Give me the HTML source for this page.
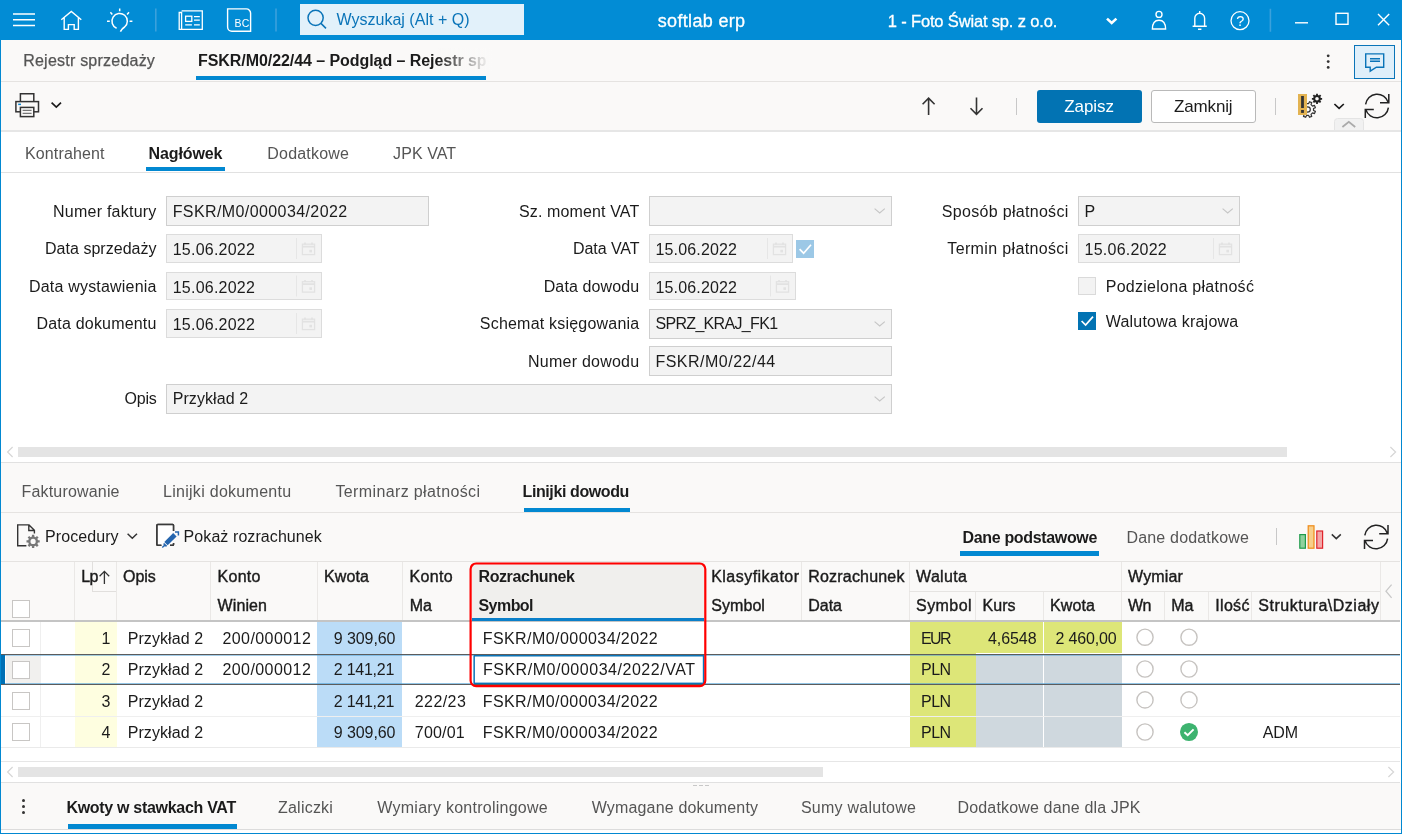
<!DOCTYPE html>
<html lang="pl"><head><meta charset="utf-8"><title>softlab erp</title>
<style>
html,body{margin:0;padding:0;}
body{width:1402px;height:834px;overflow:hidden;background:#fff;font-family:"Liberation Sans",sans-serif;}
#app{position:relative;width:1402px;height:834px;overflow:hidden;background:#fff;}
#app *{box-sizing:border-box;}
.a{position:absolute;}
.t{position:absolute;white-space:pre;line-height:1;color:#1b1b1b;}
.fld{position:absolute;background:#f3f3f3;border:1px solid #cfcfcf;}
.fld2{border-color:#dcdcdc;}
.hl{position:absolute;height:1px;background:#e1dfdd;}
.vl{position:absolute;width:1px;background:#eae8e6;}
.cb{position:absolute;width:18px;height:18px;background:#fff;border:1px solid #c8c6c4;}
.rad{position:absolute;width:18px;height:18px;border-radius:50%;border:1.2px solid #c6c3c0;background:#fff;}
svg{position:absolute;overflow:visible;}
#txt{position:absolute;left:0;top:0;width:1402px;height:834px;will-change:transform;z-index:3;}

</style></head>
<body>
<div id="app">
<!-- title bar -->
<div class="a" style="left:0;top:0;width:1402px;height:40px;background:#028cd5"></div>
<div class="a" style="left:300px;top:4px;width:224px;height:30.8px;background:#e2f1fa"></div>
<!-- tabs strip + toolbar background -->
<div class="a" style="left:0;top:40px;width:1402px;height:92px;background:#faf9f8"></div>
<div class="hl" style="left:0;top:81px;width:1402px;background:#e5e3e1"></div>
<div class="a" style="left:195.5px;top:75.6px;width:290.5px;height:4.4px;background:#0288d1"></div>
<div class="a" style="left:436px;top:48px;width:56px;height:26px;z-index:4;background:linear-gradient(90deg,rgba(250,249,248,0),rgba(250,249,248,.97) 92%)"></div>
<div class="a" style="left:0;top:130px;width:1402px;height:2px;background:#e6e6e6"></div>
<!-- chat button -->
<div class="a" style="left:1354px;top:45px;width:41px;height:33.5px;background:#dfeffa;border:1.3px solid #0a74b8"></div>
<!-- Zapisz / Zamknij -->
<div class="a" style="left:1037px;top:90px;width:105px;height:33px;background:#0273b3;border-radius:3px"></div>
<div class="a" style="left:1151px;top:90px;width:105px;height:33px;background:#fff;border:1px solid #b9b9b9;border-radius:3px"></div>
<div class="vl" style="left:1016px;top:98px;height:17px;background:#c8c8c8"></div>
<div class="vl" style="left:1275px;top:98px;height:17px;background:#c8c8c8"></div>
<!-- form panel -->
<div class="hl" style="left:0;top:172px;width:1402px;background:#e1e1e1"></div>
<div class="a" style="left:146px;top:167px;width:78.7px;height:4.4px;background:#0288d1"></div>
<!-- fields col1 -->
<div class="fld" style="left:166px;top:196px;width:263px;height:30px"></div>
<div class="fld fld2" style="left:166px;top:234px;width:156px;height:29px"></div>
<div class="fld fld2" style="left:166px;top:272px;width:156px;height:28px"></div>
<div class="fld fld2" style="left:166px;top:309px;width:156px;height:29px"></div>
<div class="fld" style="left:166px;top:384px;width:726px;height:30px"></div>
<!-- fields col2 -->
<div class="fld" style="left:649px;top:196px;width:243px;height:30px"></div>
<div class="fld fld2" style="left:649px;top:234px;width:144px;height:29px"></div>
<div class="fld fld2" style="left:649px;top:272px;width:147px;height:28px"></div>
<div class="fld" style="left:649px;top:309px;width:243px;height:30px"></div>
<div class="fld" style="left:649px;top:346px;width:243px;height:30px"></div>
<!-- fields col3 -->
<div class="fld" style="left:1078px;top:196px;width:162px;height:30px"></div>
<div class="fld fld2" style="left:1078px;top:234px;width:162px;height:29px"></div>
<!-- check boxes -->
<div class="a" style="left:796px;top:240px;width:18px;height:18px;background:#9cc8e6"></div>
<div class="a" style="left:1078px;top:277px;width:18px;height:18px;background:#f3f3f3;border:1px solid #dadada"></div>
<div class="a" style="left:1078px;top:312px;width:18px;height:18px;background:#0273b3"></div>
<!-- form scrollbar -->
<div class="a" style="left:18px;top:447px;width:1269px;height:10.4px;background:#e4e4e4"></div>
<div class="hl" style="left:0;top:462px;width:1402px;background:#e1e1e1"></div>
<!-- lower panel -->
<div class="a" style="left:0;top:463px;width:1402px;height:98px;background:#faf9f8"></div>
<div class="hl" style="left:0;top:512px;width:1402px;background:#e5e3e1"></div>
<div class="a" style="left:524px;top:508px;width:106px;height:4.4px;background:#0288d1"></div>
<div class="a" style="left:960px;top:551.2px;width:139px;height:4.6px;background:#0288d1"></div>
<div class="vl" style="left:1276px;top:528px;height:17px;background:#c8c8c8"></div>
<!-- grid header -->
<div class="a" style="left:0;top:561px;width:1402px;height:60px;background:#faf9f8;border-top:1px solid #e5e3e1"></div>
<div class="a" style="left:472px;top:562px;width:232px;height:59px;background:#f0efed"></div>
<div class="a" style="left:0;top:620.3px;width:1400px;height:1.5px;background:#c4c4c4"></div>
<div class="a" style="left:472px;top:618px;width:232px;height:2.7px;background:#0a7fc9"></div>
<div class="a" style="left:92px;top:561px;width:25px;height:31px;border:1px solid #e1dfdd;background:#faf9f8"></div>
<div class="vl" style="left:74px;top:562px;height:58px"></div>
<div class="vl" style="left:116px;top:562px;height:58px"></div>
<div class="vl" style="left:210px;top:562px;height:58px"></div>
<div class="vl" style="left:317px;top:562px;height:58px"></div>
<div class="vl" style="left:402px;top:562px;height:58px"></div>
<div class="vl" style="left:801px;top:562px;height:58px"></div>
<div class="vl" style="left:909px;top:562px;height:58px"></div>
<div class="vl" style="left:975px;top:591px;height:29px"></div>
<div class="vl" style="left:1043px;top:591px;height:29px"></div>
<div class="vl" style="left:1121px;top:562px;height:58px"></div>
<div class="vl" style="left:1164px;top:591px;height:29px"></div>
<div class="vl" style="left:1208px;top:591px;height:29px"></div>
<div class="vl" style="left:1251px;top:591px;height:29px"></div>
<div class="vl" style="left:1380px;top:562px;height:58px"></div>
<div class="hl" style="left:909px;top:591px;width:471px;background:#e6e4e2"></div>
<div class="cb" style="left:12px;top:600px"></div>
<!-- grid rows backgrounds -->
<div class="a" style="left:0;top:622px;width:1402px;height:126px;background:#fff"></div>
<!-- Lp yellow -->
<div class="a" style="left:75px;top:622px;width:42px;height:125px;background:#fefee0"></div>
<!-- Kwota blue -->
<div class="a" style="left:317px;top:622px;width:85px;height:125px;background:#bbdcf7"></div>
<!-- Waluta yellowgreen + grey -->
<div class="a" style="left:910px;top:622px;width:66px;height:125px;background:#dde678"></div>
<div class="a" style="left:976px;top:622px;width:67px;height:31px;background:#dde678"></div>
<div class="a" style="left:1044px;top:622px;width:77.8px;height:31px;background:#dde678"></div>
<div class="a" style="left:976px;top:654px;width:67px;height:93px;background:#cfd8de"></div>
<div class="a" style="left:1044px;top:654px;width:77.8px;height:93px;background:#cfd8de"></div>
<!-- row lines -->
<div class="hl" style="left:0;top:716px;width:1400px;background:#efefef"></div>
<div class="hl" style="left:0;top:747px;width:1400px;background:#eaeaea"></div>
<div class="vl" style="left:40px;top:622px;height:125px;background:#efefef"></div>
<!-- selected row -->
<div class="a" style="left:6px;top:655.5px;width:34.4px;height:28px;background:#f1f0ee"></div>
<div class="a" style="left:0;top:654px;width:1400px;height:1px;background:#5c5c5c"></div><div class="a" style="left:0;top:655px;width:1400px;height:1px;background:rgba(74,158,214,.5)"></div>
<div class="a" style="left:0;top:682.7px;width:1400px;height:1px;background:rgba(74,158,214,.6)"></div><div class="a" style="left:0;top:683.6px;width:1400px;height:1px;background:#5c5c5c"></div>
<div class="a" style="left:1px;top:655px;width:4px;height:28.6px;background:#0070b5"></div>
<div class="a" style="left:473.4px;top:655px;width:230.9px;height:29.1px;background:#fff"></div>
<!-- row checkboxes -->
<div class="cb" style="left:12px;top:629px"></div>
<div class="cb" style="left:12px;top:661px"></div>
<div class="cb" style="left:12px;top:691.5px"></div>
<div class="cb" style="left:12px;top:723px"></div>
<!-- radios -->




<div class="a" style="left:1180.1px;top:723.1px;width:17.8px;height:17.8px;border-radius:50%;background:#3db36f"></div>
<!-- red annotation -->

<!-- grid bottom / scrollbar -->
<div class="hl" style="left:0;top:761px;width:1402px;background:#e6e6e6"></div>
<div class="a" style="left:18px;top:767px;width:805px;height:10.4px;background:#e4e4e4"></div>
<div class="hl" style="left:0;top:782px;width:1402px;background:#e1e1e1"></div>
<!-- bottom tabs -->
<div class="a" style="left:0;top:783px;width:1402px;height:51px;background:#faf9f8"></div>
<div class="a" style="left:68px;top:824px;width:169px;height:4.7px;background:#0288d1"></div>
<div class="hl" style="left:0;top:829px;width:1402px;background:#dcdcdc"></div>
<!-- window border -->
<div class="a" style="left:0;top:40px;width:1px;height:794px;background:#0288d1;z-index:7"></div>
<div class="a" style="left:1400px;top:561px;width:1px;height:222px;background:#fff;z-index:7"></div><div class="a" style="left:1401px;top:40px;width:1px;height:794px;background:#0288d1;z-index:7"></div>
<div class="a" style="left:0;top:830px;width:1402px;height:3px;background:#fff"></div><div class="a" style="left:0;top:833px;width:1402px;height:1px;background:#0288d1;z-index:7"></div>

<div id="txt">
<span class="t" style="left:336.50px;top:12.00px;font-size:16px;color:#0a74b8;letter-spacing:0.013px;">Wyszukaj (Alt + Q)</span>
<span class="t" style="left:657.80px;top:12.00px;font-size:18px;color:#ffffff;letter-spacing:0.322px;-webkit-text-stroke:0.3px #fff;">softlab erp</span>
<span class="t" style="left:887.80px;top:13.00px;font-size:16.5px;color:#ffffff;letter-spacing:-0.161px;-webkit-text-stroke:0.3px #fff;">1 - Foto Świat sp. z o.o.</span>
<span class="t" style="left:23.20px;top:53.00px;font-size:16px;color:#555555;letter-spacing:0.227px;-webkit-text-stroke:0.25px #555;">Rejestr sprzedaży</span>
<span class="t" style="left:198.00px;top:53.00px;font-size:16px;font-weight:700;letter-spacing:-0.063px;">FSKR/M0/22/44 – Podgląd – Rejestr sp</span>
<span class="t" style="left:1064.30px;top:98.00px;font-size:17px;color:#ffffff;letter-spacing:-0.096px;">Zapisz</span>
<span class="t" style="left:1174.00px;top:98.00px;font-size:17px;letter-spacing:-0.145px;">Zamknij</span>
<span class="t" style="left:25.00px;top:146.00px;font-size:16px;color:#555555;letter-spacing:0.132px;">Kontrahent</span>
<span class="t" style="left:148.60px;top:146.00px;font-size:16px;font-weight:700;letter-spacing:-0.111px;">Nagłówek</span>
<span class="t" style="left:267.30px;top:146.00px;font-size:16px;color:#555555;letter-spacing:0.206px;">Dodatkowe</span>
<span class="t" style="left:393.10px;top:146.00px;font-size:16px;color:#555555;letter-spacing:0.067px;">JPK VAT</span>
<span class="t" style="left:53.00px;top:204.00px;font-size:16px;letter-spacing:0.241px;">Numer faktury</span>
<span class="t" style="left:45.00px;top:241.00px;font-size:16px;letter-spacing:0.031px;">Data sprzedaży</span>
<span class="t" style="left:29.00px;top:279.00px;font-size:16px;letter-spacing:0.194px;">Data wystawienia</span>
<span class="t" style="left:36.50px;top:316.00px;font-size:16px;letter-spacing:0.192px;">Data dokumentu</span>
<span class="t" style="left:124.50px;top:391.00px;font-size:16px;letter-spacing:-0.202px;">Opis</span>
<span class="t" style="left:172.70px;top:204.00px;font-size:16px;letter-spacing:0.404px;">FSKR/M0/000034/2022</span>
<span class="t" style="left:172.70px;top:242.00px;font-size:16px;letter-spacing:0.232px;">15.06.2022</span>
<span class="t" style="left:172.70px;top:280.00px;font-size:16px;letter-spacing:0.232px;">15.06.2022</span>
<span class="t" style="left:172.70px;top:317.00px;font-size:16px;letter-spacing:0.232px;">15.06.2022</span>
<span class="t" style="left:172.70px;top:391.00px;font-size:16px;letter-spacing:0.080px;">Przykład 2</span>
<span class="t" style="left:519.00px;top:204.00px;font-size:16px;letter-spacing:0.132px;">Sz. moment VAT</span>
<span class="t" style="left:573.00px;top:241.00px;font-size:16px;letter-spacing:-0.073px;">Data VAT</span>
<span class="t" style="left:543.70px;top:279.00px;font-size:16px;letter-spacing:0.128px;">Data dowodu</span>
<span class="t" style="left:479.80px;top:316.00px;font-size:16px;letter-spacing:0.208px;">Schemat księgowania</span>
<span class="t" style="left:528.00px;top:354.00px;font-size:16px;letter-spacing:0.242px;">Numer dowodu</span>
<span class="t" style="left:655.40px;top:242.00px;font-size:16px;letter-spacing:0.172px;">15.06.2022</span>
<span class="t" style="left:655.40px;top:280.00px;font-size:16px;letter-spacing:0.172px;">15.06.2022</span>
<span class="t" style="left:655.40px;top:316.00px;font-size:16px;letter-spacing:-0.671px;">SPRZ_KRAJ_FK1</span>
<span class="t" style="left:655.40px;top:354.00px;font-size:16px;letter-spacing:0.498px;">FSKR/M0/22/44</span>
<span class="t" style="left:941.80px;top:204.00px;font-size:16px;letter-spacing:0.309px;">Sposób płatności</span>
<span class="t" style="left:947.30px;top:241.00px;font-size:16px;letter-spacing:0.356px;">Termin płatności</span>
<span class="t" style="left:1084.60px;top:204.00px;font-size:16px;">P</span>
<span class="t" style="left:1084.60px;top:242.00px;font-size:16px;letter-spacing:0.232px;">15.06.2022</span>
<span class="t" style="left:1105.70px;top:279.00px;font-size:16px;letter-spacing:0.278px;">Podzielona płatność</span>
<span class="t" style="left:1105.70px;top:314.00px;font-size:16px;letter-spacing:0.217px;">Walutowa krajowa</span>
<span class="t" style="left:21.50px;top:484.00px;font-size:16px;color:#555555;letter-spacing:0.179px;">Fakturowanie</span>
<span class="t" style="left:163.00px;top:484.00px;font-size:16px;color:#555555;letter-spacing:0.281px;">Linijki dokumentu</span>
<span class="t" style="left:335.40px;top:484.00px;font-size:16px;color:#555555;letter-spacing:0.377px;">Terminarz płatności</span>
<span class="t" style="left:522.50px;top:484.00px;font-size:16px;font-weight:700;letter-spacing:-0.392px;">Linijki dowodu</span>
<span class="t" style="left:45.00px;top:529.00px;font-size:16px;letter-spacing:0.086px;">Procedury</span>
<span class="t" style="left:183.60px;top:529.00px;font-size:16px;letter-spacing:0.078px;">Pokaż rozrachunek</span>
<span class="t" style="left:962.50px;top:530.00px;font-size:16px;font-weight:700;letter-spacing:-0.339px;">Dane podstawowe</span>
<span class="t" style="left:1126.50px;top:530.00px;font-size:16px;color:#555555;letter-spacing:0.172px;">Dane dodatkowe</span>
<span class="t" style="left:81.20px;top:569.00px;font-size:16px;letter-spacing:-0.648px;-webkit-text-stroke:0.4px #1b1b1b;">Lp</span>
<span class="t" style="left:123.00px;top:569.00px;font-size:16px;letter-spacing:-0.052px;-webkit-text-stroke:0.4px #1b1b1b;">Opis</span>
<span class="t" style="left:217.60px;top:569.00px;font-size:16px;letter-spacing:0.237px;-webkit-text-stroke:0.4px #1b1b1b;">Konto</span>
<span class="t" style="left:217.60px;top:598.00px;font-size:16px;letter-spacing:0.082px;-webkit-text-stroke:0.4px #1b1b1b;">Winien</span>
<span class="t" style="left:324.10px;top:569.00px;font-size:16px;letter-spacing:0.086px;-webkit-text-stroke:0.4px #1b1b1b;">Kwota</span>
<span class="t" style="left:409.50px;top:569.00px;font-size:16px;letter-spacing:0.338px;-webkit-text-stroke:0.4px #1b1b1b;">Konto</span>
<span class="t" style="left:409.80px;top:598.00px;font-size:16px;letter-spacing:-0.167px;-webkit-text-stroke:0.4px #1b1b1b;">Ma</span>
<span class="t" style="left:478.50px;top:569.00px;font-size:16px;font-weight:700;letter-spacing:-0.406px;">Rozrachunek</span>
<span class="t" style="left:478.50px;top:598.00px;font-size:16px;font-weight:700;letter-spacing:-0.549px;">Symbol</span>
<span class="t" style="left:711.20px;top:569.00px;font-size:16px;letter-spacing:0.466px;-webkit-text-stroke:0.4px #1b1b1b;">Klasyfikator</span>
<span class="t" style="left:711.20px;top:598.00px;font-size:16px;letter-spacing:0.073px;-webkit-text-stroke:0.4px #1b1b1b;">Symbol</span>
<span class="t" style="left:808.30px;top:569.00px;font-size:16px;letter-spacing:0.184px;-webkit-text-stroke:0.4px #1b1b1b;">Rozrachunek</span>
<span class="t" style="left:808.30px;top:598.00px;font-size:16px;letter-spacing:-0.024px;-webkit-text-stroke:0.4px #1b1b1b;">Data</span>
<span class="t" style="left:916.10px;top:569.00px;font-size:16px;letter-spacing:0.299px;-webkit-text-stroke:0.4px #1b1b1b;">Waluta</span>
<span class="t" style="left:916.10px;top:598.00px;font-size:16px;letter-spacing:0.423px;-webkit-text-stroke:0.4px #1b1b1b;">Symbol</span>
<span class="t" style="left:982.60px;top:598.00px;font-size:16px;letter-spacing:0.023px;-webkit-text-stroke:0.4px #1b1b1b;">Kurs</span>
<span class="t" style="left:1050.00px;top:598.00px;font-size:16px;letter-spacing:0.086px;-webkit-text-stroke:0.4px #1b1b1b;">Kwota</span>
<span class="t" style="left:1128.00px;top:569.00px;font-size:16px;letter-spacing:0.170px;-webkit-text-stroke:0.4px #1b1b1b;">Wymiar</span>
<span class="t" style="left:1128.00px;top:598.00px;font-size:16px;letter-spacing:-0.500px;-webkit-text-stroke:0.4px #1b1b1b;">Wn</span>
<span class="t" style="left:1171.30px;top:598.00px;font-size:16px;letter-spacing:-0.067px;-webkit-text-stroke:0.4px #1b1b1b;">Ma</span>
<span class="t" style="left:1215.30px;top:598.00px;font-size:16px;letter-spacing:0.299px;-webkit-text-stroke:0.4px #1b1b1b;">Ilość</span>
<span class="t" style="left:1258.30px;top:598.00px;font-size:16px;letter-spacing:0.511px;-webkit-text-stroke:0.4px #1b1b1b;">Struktura\Działy</span>
<span class="t" style="left:101.40px;top:631.00px;font-size:16px;">1</span>
<span class="t" style="left:127.70px;top:631.00px;font-size:16px;letter-spacing:0.080px;">Przykład 2</span>
<span class="t" style="left:101.40px;top:662.00px;font-size:16px;">2</span>
<span class="t" style="left:127.70px;top:662.00px;font-size:16px;letter-spacing:0.080px;">Przykład 2</span>
<span class="t" style="left:101.40px;top:694.00px;font-size:16px;">3</span>
<span class="t" style="left:127.70px;top:694.00px;font-size:16px;letter-spacing:0.080px;">Przykład 2</span>
<span class="t" style="left:101.40px;top:725.00px;font-size:16px;">4</span>
<span class="t" style="left:127.70px;top:725.00px;font-size:16px;letter-spacing:0.080px;">Przykład 2</span>
<span class="t" style="left:222.40px;top:631.00px;font-size:16px;letter-spacing:0.437px;">200/000012</span>
<span class="t" style="left:222.40px;top:662.00px;font-size:16px;letter-spacing:0.437px;">200/000012</span>
<span class="t" style="left:333.80px;top:631.00px;font-size:16px;letter-spacing:-0.085px;">9 309,60</span>
<span class="t" style="left:333.80px;top:662.00px;font-size:16px;letter-spacing:-0.248px;">2 141,21</span>
<span class="t" style="left:333.80px;top:694.00px;font-size:16px;letter-spacing:-0.248px;">2 141,21</span>
<span class="t" style="left:333.80px;top:725.00px;font-size:16px;letter-spacing:-0.085px;">9 309,60</span>
<span class="t" style="left:414.80px;top:694.00px;font-size:16px;letter-spacing:0.410px;">222/23</span>
<span class="t" style="left:414.80px;top:725.00px;font-size:16px;letter-spacing:0.194px;">700/01</span>
<span class="t" style="left:482.70px;top:631.00px;font-size:16px;letter-spacing:0.436px;">FSKR/M0/000034/2022</span>
<span class="t" style="left:482.90px;top:662.00px;font-size:16px;letter-spacing:0.530px;">FSKR/M0/000034/2022/VAT</span>
<span class="t" style="left:482.70px;top:694.00px;font-size:16px;letter-spacing:0.436px;">FSKR/M0/000034/2022</span>
<span class="t" style="left:482.70px;top:725.00px;font-size:16px;letter-spacing:0.436px;">FSKR/M0/000034/2022</span>
<span class="t" style="left:921.00px;top:631.00px;font-size:16px;letter-spacing:-1.660px;">EUR</span>
<span class="t" style="left:921.00px;top:662.00px;font-size:16px;letter-spacing:-0.542px;">PLN</span>
<span class="t" style="left:921.00px;top:694.00px;font-size:16px;letter-spacing:-0.542px;">PLN</span>
<span class="t" style="left:921.00px;top:725.00px;font-size:16px;letter-spacing:-0.542px;">PLN</span>
<span class="t" style="left:988.00px;top:631.00px;font-size:16px;letter-spacing:-0.073px;">4,6548</span>
<span class="t" style="left:1055.40px;top:631.00px;font-size:16px;letter-spacing:-0.160px;">2 460,00</span>
<span class="t" style="left:1262.70px;top:725.00px;font-size:16px;letter-spacing:-0.021px;">ADM</span>
<span class="t" style="left:66.40px;top:800.00px;font-size:16px;font-weight:700;letter-spacing:-0.298px;">Kwoty w stawkach VAT</span>
<span class="t" style="left:278.00px;top:800.00px;font-size:16px;color:#555555;letter-spacing:0.220px;">Zaliczki</span>
<span class="t" style="left:377.30px;top:800.00px;font-size:16px;color:#555555;letter-spacing:0.260px;">Wymiary kontrolingowe</span>
<span class="t" style="left:591.70px;top:800.00px;font-size:16px;color:#555555;letter-spacing:0.167px;">Wymagane dokumenty</span>
<span class="t" style="left:800.90px;top:800.00px;font-size:16px;color:#555555;letter-spacing:0.250px;">Sumy walutowe</span>
<span class="t" style="left:957.50px;top:800.00px;font-size:16px;color:#555555;letter-spacing:0.160px;">Dodatkowe dane dla JPK</span>
<span class="t" style="left:234.40px;top:18.00px;font-size:10.5px;color:#ffffff;letter-spacing:0.403px;">BC</span>
<span class="t" style="left:1236.20px;top:14.00px;font-size:14.5px;color:#ffffff;">?</span>
</div>
<svg class="a" style="left:0;top:0;z-index:6" width="1402" height="834" viewBox="0 0 1402 834" fill="none" stroke-linecap="butt" stroke-linejoin="miter">
<!-- ===== title bar icons (white) ===== -->
<g stroke="#fff" stroke-width="1.5">
  <path d="M13 14H35M13 19.7H35M13 25.4H35"/>
  <!-- home -->
  <path d="M61.3 19.8L71.3 11.4L81.3 19.8M64.2 17.6V29.4H68.4V24.6H74.2V29.4H78.4V17.6" stroke-width="1.4"/>
  <!-- bulb -->
  <path d="M116.6 28.2A7.7 7.7 0 1 1 124.6 27C122.6 28.2 121.2 29.6 120.4 31.6" stroke-width="1.5"/>
  <path d="M119.7 8.4V11.2M110.4 12.2L112.3 14.4M129 12.2L127.1 14.4M107 21.3H109.8M129.6 21.3H132.4" stroke-width="1.5"/>
  <!-- newspaper -->
  <path d="M181.6 10.9H202.3V29.3H179.2V12.5H181.6V29.3" stroke-width="1.3"/>
  <rect x="185.6" y="16.2" width="6.2" height="5.2" stroke-width="1.3"/>
  <path d="M194 16.6H199.8M194 20.2H199.8M185.2 24.9H191.9M194 24.9H199.8" stroke-width="1.3"/>
  <!-- BC -->
  <path d="M227.6 8.9H246.4A4.2 4.2 0 0 1 250.6 13.1V31.2H231.8A4.2 4.2 0 0 1 227.6 27Z" stroke-width="1.4"/>
  <!-- person -->
  <circle cx="1159" cy="14.4" r="3" stroke-width="1.4"/>
  <path d="M1152.4 29H1165.6C1165.6 23.5 1163 20.2 1159 20.2C1155 20.2 1152.4 23.5 1152.4 29Z" stroke-width="1.4"/>
  <!-- bell -->
  <path d="M1192.6 26.2H1206.8M1194.8 26.2V18.2A4.9 4.9 0 0 1 1204.6 18.2V26.2M1199.7 11V13.2M1198 29.2H1201.4" stroke-width="1.4"/>
  <!-- help -->
  <circle cx="1240" cy="20.7" r="9" stroke-width="1.3"/>
  <!-- window controls -->
  <path d="M1295 22.8H1308" stroke-width="1.4"/>
  <rect x="1336" y="13.3" width="12" height="11" stroke-width="1.4"/>
  <path d="M1378 14L1389.2 25.2M1389.2 14L1378 25.2" stroke-width="1.4"/>
  <!-- company chevron -->
  <path d="M1107 18.6L1111.7 23L1116.4 18.6" stroke-width="2.6"/>
</g>
<path d="M155.8 8.5V31.5M276 8.5V31.5M1270.4 8.8V31.8" stroke="#3ba1dc" stroke-width="1.6"/>
<!-- search magnifier -->
<g stroke="#0a74b8" stroke-width="1.5"><circle cx="315.6" cy="17.8" r="7.6"/><path d="M321 23.4L326 28.4"/></g>
<!-- ===== tab strip right ===== -->
<g fill="#333" stroke="none"><circle cx="1328.2" cy="55.8" r="1.4"/><circle cx="1328.2" cy="61.6" r="1.4"/><circle cx="1328.2" cy="67.4" r="1.4"/></g>
<g stroke="#0a74b8" stroke-width="1.4">
  <path d="M1365.7 53.9H1383.7V67.2H1376.4L1370.2 71.2V67.2H1365.7Z"/>
  <path d="M1370 58.7H1380M1370 61.3H1380" stroke-width="1.5"/>
</g>
<!-- ===== main toolbar ===== -->
<g stroke="#333" stroke-width="1.5">
  <rect x="15.9" y="101.6" width="22.6" height="10.2"/>
  <path d="M20.4 101.6V93.8H33.8V101.6"/>
  <rect x="20.4" y="107.4" width="13.4" height="9.2" fill="#faf9f8"/>
</g>
<path d="M22.6 110.3H31.6M22.6 113.4H31.6" stroke="#777" stroke-width="1.2"/>
<rect x="18.2" y="103.6" width="2.8" height="1.5" fill="#0a84d0"/>
<g stroke="#1b1b1b" stroke-width="1.7">
  <path d="M51.6 102.6L56.3 107L61 102.6"/>
  <path d="M1334.4 104L1339.1 108.4L1343.8 104"/>
</g>
<g stroke="#333" stroke-width="1.6">
  <path d="M928.6 115V98M922.6 104.2L928.6 98.2L934.6 104.2"/>
  <path d="M976.5 97.5V114.5M970.5 108.3L976.5 114.3L982.5 108.3"/>
</g>
<!-- gear w/ exclamation -->
<path d="M1313.51 110.55L1315.37 111.41L1314.45 113.64L1312.52 112.93L1311.03 114.42L1311.74 116.35L1309.51 117.27L1308.65 115.41L1306.55 115.41L1305.69 117.27L1303.46 116.35L1304.17 114.42L1302.68 112.93L1300.75 113.64L1299.83 111.41L1301.69 110.55L1301.69 108.45L1299.83 107.59L1300.75 105.36L1302.68 106.07L1304.17 104.58L1303.46 102.65L1305.69 101.73L1306.55 103.59L1308.65 103.59L1309.51 101.73L1311.74 102.65L1311.03 104.58L1312.52 106.07L1314.45 105.36L1315.37 107.59L1313.51 108.45Z" stroke="#333" stroke-width="1.2" stroke-linejoin="round"/>
<circle cx="1307.6" cy="109.5" r="2.7" stroke="#333" stroke-width="1.2"/>
<path d="M1320.79 97.89L1322.12 97.89L1322.12 99.71L1320.79 99.71L1320.33 100.84L1321.27 101.77L1319.97 103.07L1319.04 102.13L1317.91 102.59L1317.91 103.92L1316.09 103.92L1316.09 102.59L1314.96 102.13L1314.03 103.07L1312.73 101.77L1313.67 100.84L1313.21 99.71L1311.88 99.71L1311.88 97.89L1313.21 97.89L1313.67 96.76L1312.73 95.83L1314.03 94.53L1314.96 95.47L1316.09 95.01L1316.09 93.68L1317.91 93.68L1317.91 95.01L1319.04 95.47L1319.97 94.53L1321.27 95.83L1320.33 96.76ZM1318.8 98.8A1.8 1.8 0 1 0 1315.2 98.8A1.8 1.8 0 1 0 1318.8 98.8Z" fill="#222" fill-rule="evenodd" stroke="none"/>
<rect x="1298" y="94" width="9" height="21" fill="#e3b351"/>
<rect x="1301.1" y="96" width="2.8" height="12" fill="#333"/>
<rect x="1301.1" y="110" width="2.8" height="2.9" fill="#333"/>
<!-- refresh icons -->
<g stroke="#222" stroke-width="1.5">
<path d="M1365.6 104.4A11.6 11.6 0 0 1 1388.2 102.4M1388.8 94.0V102.7H1380.0"/><path d="M1388.4 107.6A11.6 11.6 0 0 1 1365.8 109.6M1365.3 118.0V109.4H1373.8"/>
<path d="M1364.8 535.4A11.6 11.6 0 0 1 1387.4 533.4M1388.0 525.0V533.7H1379.2"/><path d="M1387.6 538.6A11.6 11.6 0 0 1 1365.0 540.6M1364.5 549.0V540.4H1373.0"/>
</g>
<!-- collapse tab -->
<path d="M1334.5 130V121.5A3 3 0 0 1 1337.5 118.5H1360.5A3 3 0 0 1 1363.5 121.5V130" fill="#f1f1f1" stroke="#e4e4e4" stroke-width="1"/>
<path d="M1342.4 127L1348.8 121.8L1355.2 127" stroke="#aaa" stroke-width="1.8"/>
<!-- ===== form icons ===== -->
<g stroke="#c6c6c6" stroke-width="1.2">
  <path d="M874.6 208.6L879.7 213L884.8 208.6"/>
  <path d="M874.6 321.6L879.7 326L884.8 321.6"/>
  <path d="M874.6 396.6L879.7 401L884.8 396.6"/>
  <path d="M1222.6 208.6L1227.7 213L1232.8 208.6"/>
</g>
<g id="cal" stroke="#e2e2e2" stroke-width="1.3">
  <rect x="302.4" y="244.2" width="12.2" height="10.4"/><path d="M302.4 246.6H314.6M305 242.4V244.4M312 242.4V244.4" stroke-width="1.6"/><rect x="309.4" y="249.8" width="2.6" height="2.6" fill="#e2e2e2" stroke="none"/>
</g>
<use href="#cal" y="37.5"/><use href="#cal" y="75"/>
<use href="#cal" x="471" y="0"/><use href="#cal" x="474" y="37.5"/><use href="#cal" x="917" y="0"/>
<g stroke="#e6e6e6" stroke-width="1"><path d="M296.5 238V259M296.5 275.5V296.5M296.5 313V334M767.5 238V259M770.5 275.5V296.5M1213.5 238V259"/></g>
<!-- checks -->
<g stroke="#fff" stroke-width="1.7"><path d="M799.6 249.2L803.6 253.2L811 244.8"/><path d="M1081.6 321L1085.6 325L1093 316.6"/></g>
<!-- scrollbar arrows -->
<g stroke="#d6d6d6" stroke-width="1.2">
  <path d="M12.6 447L7.6 452L12.6 457"/><path d="M1390.4 447L1395.6 452L1390.4 457"/>
  <path d="M12.6 767L7.6 772L12.6 777"/><path d="M1388.4 767L1393.6 772L1388.4 777"/>
</g>
<!-- ===== lower toolbar icons ===== -->
<path d="M26.4 545.8H17.7V524.9H29L34.4 530.3V533.6M28.8 525V530.5H34.3" stroke="#333" stroke-width="1.4"/>
<path d="M37.96 540.23L39.70 540.22L39.70 542.58L37.96 542.57L37.36 544.01L38.60 545.23L36.93 546.90L35.71 545.66L34.27 546.26L34.28 548.00L31.92 548.00L31.93 546.26L30.49 545.66L29.27 546.90L27.60 545.23L28.84 544.01L28.24 542.57L26.50 542.58L26.50 540.22L28.24 540.23L28.84 538.79L27.60 537.57L29.27 535.90L30.49 537.14L31.93 536.54L31.92 534.80L34.28 534.80L34.27 536.54L35.71 537.14L36.93 535.90L38.60 537.57L37.36 538.79ZM35.7 541.4A2.6 2.6 0 1 0 30.5 541.4A2.6 2.6 0 1 0 35.7 541.4Z" fill="#777" fill-rule="evenodd" stroke="none"/>
<path d="M127.6 533.8L132.3 538.2L137 533.8" stroke="#333" stroke-width="1.5"/>
<path d="M161.4 545.3H157.7A0.8 0.8 0 0 1 156.9 544.5V525.3A0.8 0.8 0 0 1 157.7 524.5H172.7A0.8 0.8 0 0 1 173.5 525.3V531M173.5 543V544.5A0.8 0.8 0 0 1 172.7 545.3H170" fill="none" stroke="#3a3a3a" stroke-width="1.5"/>
<rect x="157.7" y="525.3" width="15" height="19.2" fill="#fff" stroke="none"/>
<path d="M161.4 545.3H157.7A0.8 0.8 0 0 1 156.9 544.5V525.3A0.8 0.8 0 0 1 157.7 524.5H172.7A0.8 0.8 0 0 1 173.5 525.3V531M173.5 543V544.5A0.8 0.8 0 0 1 172.7 545.3H170" fill="none" stroke="#3a3a3a" stroke-width="1.5"/>
<path d="M166 543.6L174.9 534.7" stroke="#2565ae" stroke-width="4.8"/>
<path d="M175 531.9H178.4V535.6" stroke="#2565ae" stroke-width="1.5"/>
<path d="M162.3 547.6L165.6 544.3M164.2 543.2V545.8H166.8" stroke="#2565ae" stroke-width="1.4"/>
<!-- chart icon -->
<rect x="1299.8" y="534.6" width="5.6" height="13.6" fill="#8fd19e" stroke="#1e9c4b" stroke-width="1.2"/>
<rect x="1308.2" y="525.8" width="5.8" height="22.4" fill="#f7cf8b" stroke="#ef8a17" stroke-width="1.2"/>
<rect x="1316.8" y="531" width="5.8" height="17.2" fill="#f3a7a7" stroke="#e0242b" stroke-width="1.2"/>
<path d="M1331.8 534.4L1336.3 538.6L1340.8 534.4" stroke="#333" stroke-width="1.5"/>
<!-- grid: sort arrow, column chooser chevron -->
<path d="M104.4 584V571.6M99.6 576.2L104.4 571.4L109.2 576.2" stroke="#333" stroke-width="1.3"/>
<path d="M1391.6 584.6L1386 591.2L1391.6 597.8" stroke="#c8c8c8" stroke-width="1.3"/>
<g stroke="#c6c3c0" stroke-width="1.4" fill="#fff"><circle cx="1145" cy="637.2" r="8.1"/><circle cx="1189" cy="637.2" r="8.1"/><circle cx="1145" cy="669" r="8.1"/><circle cx="1189" cy="669" r="8.1"/><circle cx="1145" cy="699.9" r="8.1"/><circle cx="1189" cy="699.9" r="8.1"/><circle cx="1145" cy="732" r="8.1"/></g>
<!-- green check -->
<path d="M1184.4 732.2L1187.7 735.2L1193.6 729.4" stroke="#fff" stroke-width="2"/>
<rect x="474.15" y="655.75" width="229.4" height="27.6" stroke="#0a74b8" stroke-width="1.5"/>
<rect x="470.6" y="563.5" width="234.7" height="122.6" rx="5.5" stroke="#ff0000" stroke-width="2.2"/>
<!-- bottom: dots & grip -->
<g fill="#333" stroke="none"><circle cx="23.5" cy="800.5" r="1.5"/><circle cx="23.5" cy="806.5" r="1.5"/><circle cx="23.5" cy="812.5" r="1.5"/></g>
<path d="M693 785.5H709" stroke="#c8c8c8" stroke-width="1" stroke-dasharray="4 2"/>
</svg>

</div>
</body></html>
